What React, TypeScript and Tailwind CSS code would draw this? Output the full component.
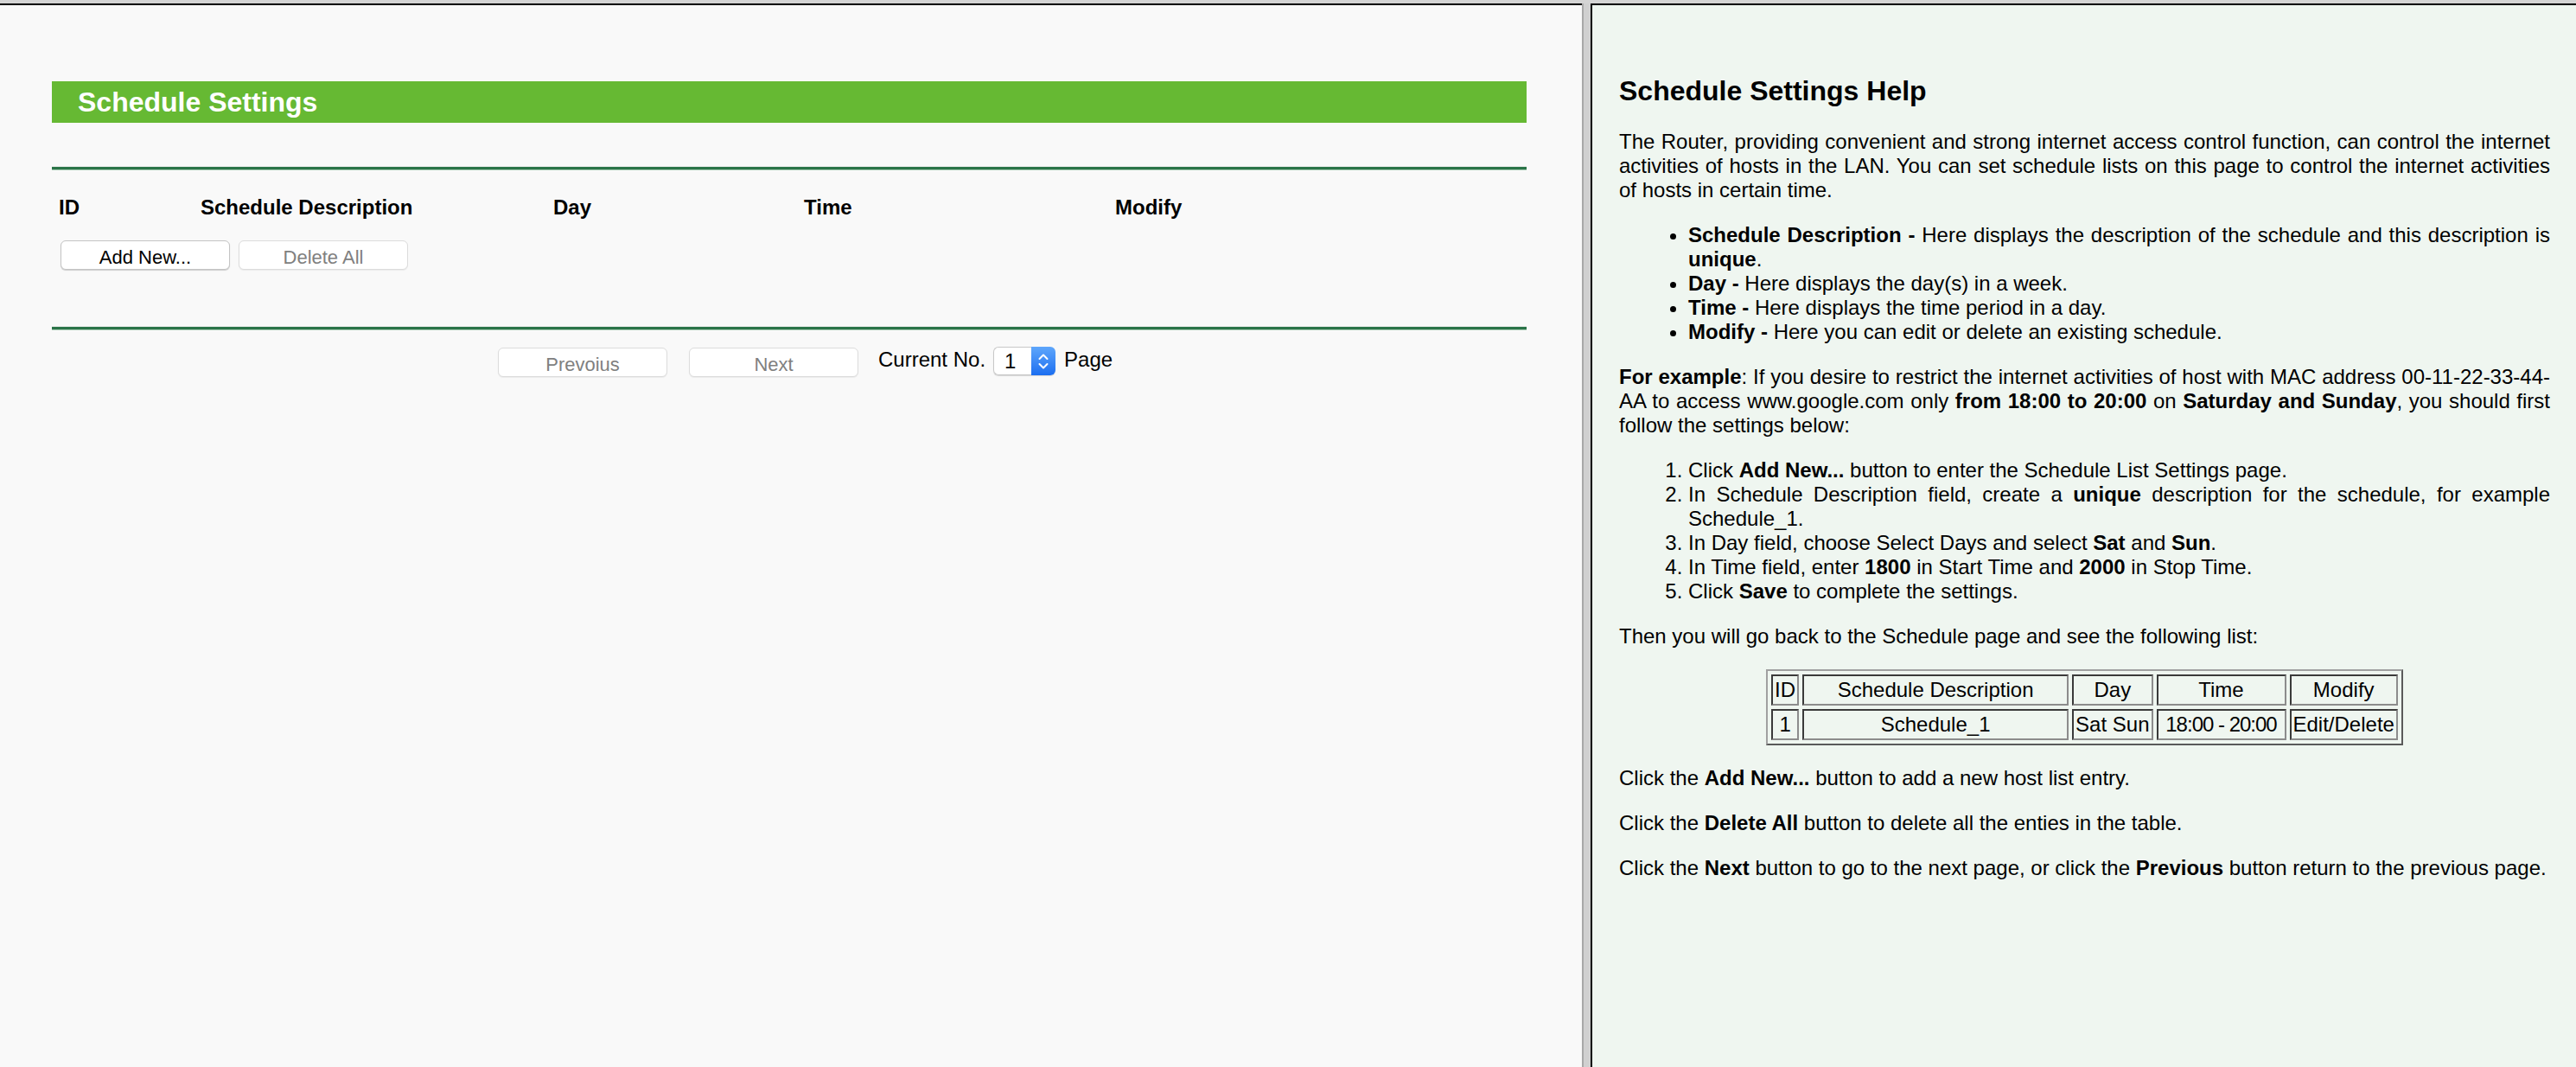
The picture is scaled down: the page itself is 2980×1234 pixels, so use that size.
import type { ReactNode } from "react";

const FONT = "font-['Liberation_Sans',Arial,Helvetica,sans-serif]";

const COLUMNS = [
  { label: "ID", width: "w-[164px]" },
  { label: "Schedule Description", width: "w-[408px]" },
  { label: "Day", width: "w-[290px]" },
  { label: "Time", width: "w-[360px]" },
  { label: "Modify", width: "flex-1" },
];

function Button({ children, disabled }: { children: ReactNode; disabled?: boolean }) {
  return (
    <button
      disabled={disabled}
      className={`w-[196px] h-[34px] pt-[6px] flex items-center justify-center bg-white rounded-[6px] text-[22px] leading-[26px] border ${
        disabled
          ? "border-[#dcdcdc] text-[#808080] shadow-[0_1px_1px_rgba(0,0,0,0.06)]"
          : "border-[#c4c4c4] text-black shadow-[0_1px_1px_rgba(0,0,0,0.18)]"
      }`}
    >
      {children}
    </button>
  );
}

function Rule() {
  return (
    <div>
      <div className="h-[1px] bg-[#e9ecea]" />
      <div className="h-[3px] bg-[#2a7448]" />
      <div className="h-[1px] bg-[#a9cbb5]" />
    </div>
  );
}

function PageSelect() {
  return (
    <div className="flex h-[33px] w-[72px] rounded-[6px] shadow-[0_1px_1px_rgba(0,0,0,0.15)]">
      <div className="flex-1 flex items-center pl-[12px] bg-white border border-r-0 border-[#c8c8c8] rounded-l-[6px] text-[24px]">
        1
      </div>
      <div className="w-[28px] rounded-r-[6px] bg-gradient-to-b from-[#5ea6fb] to-[#1b6ef0] flex items-center justify-center">
        <svg width="14" height="22" viewBox="0 0 14 22" fill="none" stroke="white" strokeWidth="2" strokeLinecap="round" strokeLinejoin="round">
          <path d="M2.5 8 L7 3.5 L11.5 8" />
          <path d="M2.5 14 L7 18.5 L11.5 14" />
        </svg>
      </div>
    </div>
  );
}

function SettingsFrame() {
  return (
    <div className="w-[1830px] shrink-0 border-t-2 border-black bg-[#f9f9f9]">
      <div className="pl-[60px] w-[1766px]">
        <div className="mt-[88px] h-[48px] bg-[#66b933] pl-[30px] text-white text-[32px] font-bold leading-[48px]">
          Schedule Settings
        </div>

        <div className="mt-[50px]">
          <Rule />
        </div>

        <div className="mt-[29px] flex pl-[8px] text-[24px] font-bold leading-[28px] text-black">
          {COLUMNS.map((c) => (
            <div key={c.label} className={c.width}>
              {c.label}
            </div>
          ))}
        </div>

        <div className="mt-[24px] ml-[10px] flex gap-[10px]">
          <Button>Add New...</Button>
          <Button disabled>Delete All</Button>
        </div>

        <div className="mt-[65px]">
          <Rule />
        </div>

        <div className="mt-[19px] ml-[516px] flex items-center text-[24px] leading-[28px] text-black">
          <div className="h-[32px] flex">
            <Button disabled>Prevoius</Button>
          </div>
          <div className="ml-[25px] h-[32px] flex">
            <Button disabled>Next</Button>
          </div>
          <span className="ml-[23px] -mt-[4px]">Current No.</span>
          <div className="ml-[9px]">
            <PageSelect />
          </div>
          <span className="ml-[10px] -mt-[4px]">Page</span>
        </div>
      </div>
    </div>
  );
}

const cell =
  "h-[36px] px-[2px] text-center font-normal border-2 border-t-[#3a3a3a] border-l-[#3a3a3a] border-b-[#8c8c8c] border-r-[#8c8c8c]";

function ExampleTable() {
  return (
    <div className="mt-[24px] flex justify-center">
      <table className="border-separate border-spacing-[4px] border-2 border-t-[#a0a0a0] border-l-[#a0a0a0] border-b-[#5a5a5a] border-r-[#5a5a5a]">
        <tbody>
          <tr>
            <th className={`${cell} w-[32px]`}>ID</th>
            <th className={`${cell} w-[308px]`}>Schedule Description</th>
            <th className={`${cell} w-[93px]`}>Day</th>
            <th className={`${cell} w-[150px]`}>Time</th>
            <th className={`${cell} w-[125px]`}>Modify</th>
          </tr>
          <tr>
            <td className={cell}>1</td>
            <td className={cell}>Schedule_1</td>
            <td className={`${cell} whitespace-nowrap`}>Sat Sun</td>
            <td className={`${cell} whitespace-nowrap tracking-[-1px]`}>18:00 - 20:00</td>
            <td className={`${cell} whitespace-nowrap`}>Edit/Delete</td>
          </tr>
        </tbody>
      </table>
    </div>
  );
}

function HelpFrame() {
  return (
    <div className="flex-1 border-t-2 border-l-2 border-black bg-[#eff6f0]">
      <div className="pt-[81px] pl-[31px] pr-[30px] text-[24px] leading-[28px] text-black">
        <h1 className="text-[32px] font-bold leading-[37px]">Schedule Settings Help</h1>

        <p className="mt-[26px] text-justify">
          The Router, providing convenient and strong internet access control function, can control the internet
          activities of hosts in the LAN. You can set schedule lists on this page to control the internet activities
          of hosts in certain time.
        </p>

        <ul className="mt-[24px] pl-[80px] list-disc text-justify">
          <li>
            <b>Schedule Description -</b> Here displays the description of the schedule and this description is{" "}
            <b>unique</b>.
          </li>
          <li>
            <b>Day -</b> Here displays the day(s) in a week.
          </li>
          <li>
            <b>Time -</b> Here displays the time period in a day.
          </li>
          <li>
            <b>Modify -</b> Here you can edit or delete an existing schedule.
          </li>
        </ul>

        <p className="mt-[24px] text-justify">
          <b>For example</b>: If you desire to restrict the internet activities of host with MAC address
          00-11-22-33-44-AA to access www.google.com only <b>from 18:00 to 20:00</b> on{" "}
          <b>Saturday and Sunday</b>, you should first follow the settings below:
        </p>

        <ol className="mt-[24px] pl-[80px] list-decimal text-justify">
          <li>
            Click <b>Add New...</b> button to enter the Schedule List Settings page.
          </li>
          <li>
            In Schedule Description field, create a <b>unique</b> description for the schedule, for example
            Schedule_1.
          </li>
          <li>
            In Day field, choose Select Days and select <b>Sat</b> and <b>Sun</b>.
          </li>
          <li>
            In Time field, enter <b>1800</b> in Start Time and <b>2000</b> in Stop Time.
          </li>
          <li>
            Click <b>Save</b> to complete the settings.
          </li>
        </ol>

        <p className="mt-[24px]">Then you will go back to the Schedule page and see the following list:</p>

        <ExampleTable />

        <p className="mt-[24px]">
          Click the <b>Add New...</b> button to add a new host list entry.
        </p>
        <p className="mt-[24px]">
          Click the <b>Delete All</b> button to delete all the enties in the table.
        </p>
        <p className="mt-[24px]">
          Click the <b>Next</b> button to go to the next page, or click the <b>Previous</b> button return to the
          previous page.
        </p>
      </div>
    </div>
  );
}

export default function App() {
  return (
    <div className={`h-[1234px] w-[2980px] flex flex-col bg-[#d4d4d4] ${FONT}`}>
      <div className="h-[4px] shrink-0" />
      <div className="flex flex-1">
        <SettingsFrame />
        {/* frameset splitter */}
        <div className="w-[10px] shrink-0 border-l-2 border-[#a8a8a8] bg-[#d0d0d0]" />
        <HelpFrame />
      </div>
    </div>
  );
}
